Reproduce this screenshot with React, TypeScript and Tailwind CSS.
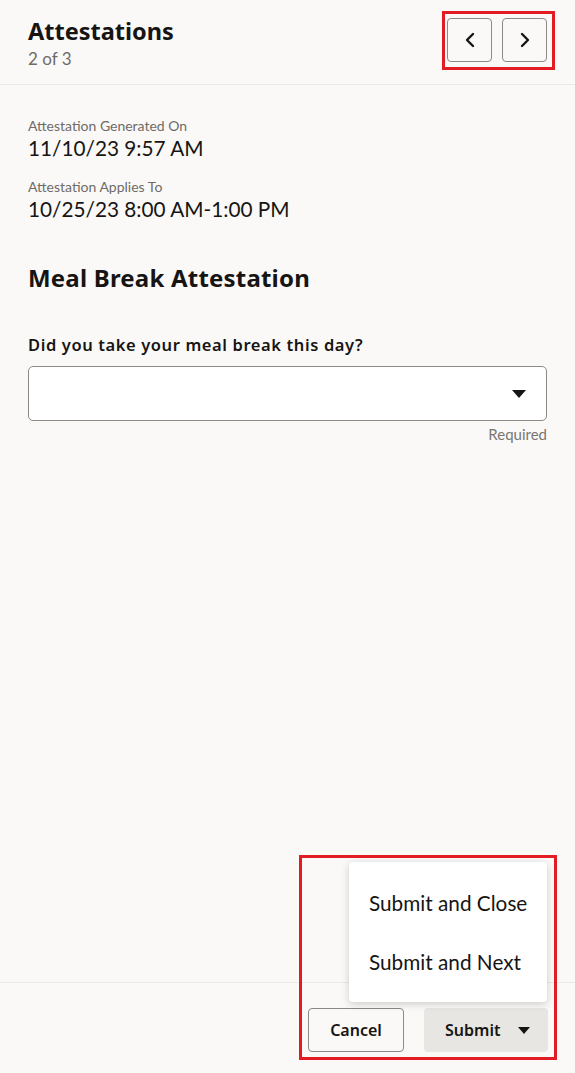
import { ChevronLeft, ChevronRight } from "lucide-react";

function Caret({ className = "" }: { className?: string }) {
  return (
    <svg width="14" height="8" viewBox="0 0 14 8" className={className}>
      <path d="M0 0h14L7 8z" fill="currentColor" />
    </svg>
  );
}

const bold = { fontFamily: "'Noto Sans', Lato, sans-serif" };

function Field({ label, value }: { label: string; value: string }) {
  return (
    <div>
      <div className="text-sm leading-5 text-[#6f6b66]">{label}</div>
      <div className="text-[20.75px] leading-6 text-[#161513]">{value}</div>
    </div>
  );
}

export default function App() {
  return (
    <div
      className="relative h-[1073px] w-[575px] overflow-hidden bg-[#faf9f8] text-[#161513] flex flex-col"
      style={{ fontFamily: "Lato, 'Noto Sans', sans-serif" }}
    >
      {/* header */}
      <div className="h-[85px] border-b border-[#ebe9e6] px-7 pt-[18px] flex items-start justify-between">
        <div>
          <h1 className="text-[23.5px] leading-[30px] font-bold -mt-[2px]" style={bold}>
            Attestations
          </h1>
          <div className="text-[17px] leading-6 text-[#6f6b66] mt-px">2 of 3</div>
        </div>
        <div className="flex gap-[10px]">
          <button className="w-[45px] h-[44px] rounded-[4px] border border-[#8d8a86] flex items-center justify-center">
            <ChevronLeft size={24} strokeWidth={2.4} />
          </button>
          <button className="w-[45px] h-[44px] rounded-[4px] border border-[#8d8a86] flex items-center justify-center">
            <ChevronRight size={24} strokeWidth={2.4} />
          </button>
        </div>
      </div>

      {/* body */}
      <div className="flex-1 px-7 pt-[31px]">
        <Field label="Attestation Generated On" value="11/10/23 9:57 AM" />
        <div className="mt-[17px]">
          <Field label="Attestation Applies To" value="10/25/23 8:00 AM-1:00 PM" />
        </div>
        <h2 className="mt-[42px] text-2xl leading-[30px] font-bold tracking-[0.2px]" style={bold}>
          Meal Break Attestation
        </h2>
        <div className="mt-[40px] text-[16.5px] leading-6 font-semibold tracking-[0.6px]" style={bold}>
          Did you take your meal break this day?
        </div>
        <div className="mt-[9px] h-[55px] rounded-[5px] border border-[#8d8a86] bg-white flex items-center justify-end pr-5">
          <Caret />
        </div>
        <div className="mt-[3px] text-right text-[15px] leading-5 text-[#7a7671]">Required</div>
      </div>

      {/* footer */}
      <div className="h-[91px] border-t border-[#ebe9e6] pt-[25px] pr-[27px] flex justify-end gap-[20px]">
        <button
          className="w-[96px] h-[44px] rounded-[4px] border border-[#8d8a86] text-base font-semibold"
          style={bold}
        >
          Cancel
        </button>
        <button
          className="w-[124px] h-[44px] rounded-[4px] bg-[#e8e6e3] text-base font-semibold flex items-center justify-between pl-[21px] pr-[18px]"
          style={bold}
        >
          Submit
          <Caret className="w-[12px] h-[7px]" />
        </button>
      </div>

      {/* submit menu */}
      <div className="absolute left-[349px] top-[862px] w-[198px] h-[140px] rounded-[4px] bg-white shadow-[0_2px_8px_rgba(0,0,0,0.18)] flex flex-col justify-center gap-[35px] pl-5 text-[20.75px] leading-6">
        <div>Submit and Close</div>
        <div>Submit and Next</div>
      </div>

      {/* annotation frames */}
      <div className="absolute left-[442px] top-[11px] w-[113px] h-[59px] border-[3px] border-[#e31b23]" />
      <div className="absolute left-[299px] top-[855px] w-[258px] h-[205px] border-[3px] border-[#e31b23]" />
    </div>
  );
}
